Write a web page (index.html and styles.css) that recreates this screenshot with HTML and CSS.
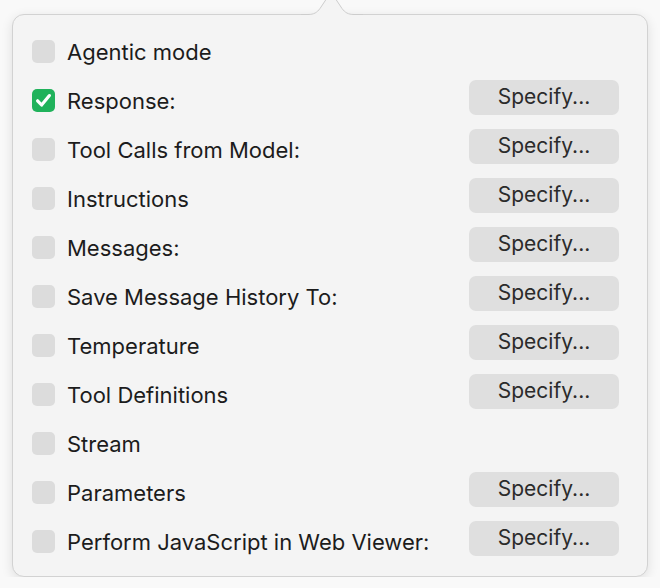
FILE: index.html
```
<!DOCTYPE html>
<html lang="en">
<head>
  <meta charset="UTF-8">
  <title>Options</title>
  <link rel="stylesheet" href="styles.css">
</head>
<body>
  <div class="popover">
    <!-- popover arrow -->
    <svg class="arrow" width="62" height="23" viewBox="0 0 62 23">
      <path d="M0,23 L0,22 L7,22 C13,22 16,20 19,16 L27,4 Q30,-1 33,4 L41,16 C44,20 47,22 53,22 L62,22 L62,23 Z" fill="#f4f4f4"/>
      <path d="M0,22.5 L7,22.5 C13,22.5 16,20.5 19,16.5 L27,4.5 Q30,-0.5 33,4.5 L41,16.5 C44,20.5 47,22.5 53,22.5 L62,22.5" fill="none" stroke="#cdcdcd" stroke-width="1"/>
    </svg>

    <ul class="options">
      <li class="row">
        <span class="check"></span>
        <span class="label">Agentic mode</span>
      </li>
      <li class="row">
        <span class="check checked">
          <svg width="23" height="23" viewBox="0 0 23 23"><path d="M5.6,11.8 L9.6,16 L17.4,6.6" fill="none" stroke="#fff" stroke-width="3.2" stroke-linecap="round" stroke-linejoin="round"/></svg>
        </span>
        <span class="label">Response:</span>
        <button class="specify">Specify...</button>
      </li>
      <li class="row">
        <span class="check"></span>
        <span class="label">Tool Calls from Model:</span>
        <button class="specify">Specify...</button>
      </li>
      <li class="row">
        <span class="check"></span>
        <span class="label">Instructions</span>
        <button class="specify">Specify...</button>
      </li>
      <li class="row">
        <span class="check"></span>
        <span class="label">Messages:</span>
        <button class="specify">Specify...</button>
      </li>
      <li class="row">
        <span class="check"></span>
        <span class="label">Save Message History To:</span>
        <button class="specify">Specify...</button>
      </li>
      <li class="row">
        <span class="check"></span>
        <span class="label">Temperature</span>
        <button class="specify">Specify...</button>
      </li>
      <li class="row">
        <span class="check"></span>
        <span class="label">Tool Definitions</span>
        <button class="specify">Specify...</button>
      </li>
      <li class="row">
        <span class="check"></span>
        <span class="label">Stream</span>
      </li>
      <li class="row">
        <span class="check"></span>
        <span class="label">Parameters</span>
        <button class="specify">Specify...</button>
      </li>
      <li class="row">
        <span class="check"></span>
        <span class="label">Perform JavaScript in Web Viewer:</span>
        <button class="specify">Specify...</button>
      </li>
    </ul>
  </div>
</body>
</html>
```

FILE: styles.css
```
body {
  margin: 0;
  background-color: #f9f9f9;
  font-family: Inter, 'Liberation Sans', sans-serif;
  color: #1c1c1c;
}
.popover {
  position: relative; /* anchor for the arrow */
  box-sizing: border-box;
  margin: 14px 0 0 12px;
  width: 636px;
  height: 563px;
  background-color: #f4f4f4;
  border: 1px solid #d2d2d2;
  border-radius: 12px;
  box-shadow: 0 3px 12px rgba(0,0,0,0.11);
  padding: 12px 28px 10px 19px;
}
.arrow {
  position: absolute;
  left: 288px;
  top: -23px;
}
.options {
  list-style: none;
  margin: 0;
  padding: 0;
}
.row {
  display: flex;
  align-items: center;
  height: 49px;
}
.check {
  display: block;
  width: 23px;
  height: 23px;
  border-radius: 5px;
  background-color: #dcdcdc;
  margin-right: 12px;
  flex-shrink: 0;
}
.check svg {
  display: block;
}
.check.checked {
  background-color: #20b25b;
}
.label {
  flex: 1;
  font-size: 22px;
  line-height: 1;
}
.specify {
  width: 150px;
  height: 35px;
  border: none;
  border-radius: 7px;
  background-color: #dfdfdf;
  font-family: Inter, 'Liberation Sans', sans-serif;
  font-size: 21px;
  color: #2b2b2b;
  padding: 0 0 3px 0;
  margin-bottom: 6px;
}
```
